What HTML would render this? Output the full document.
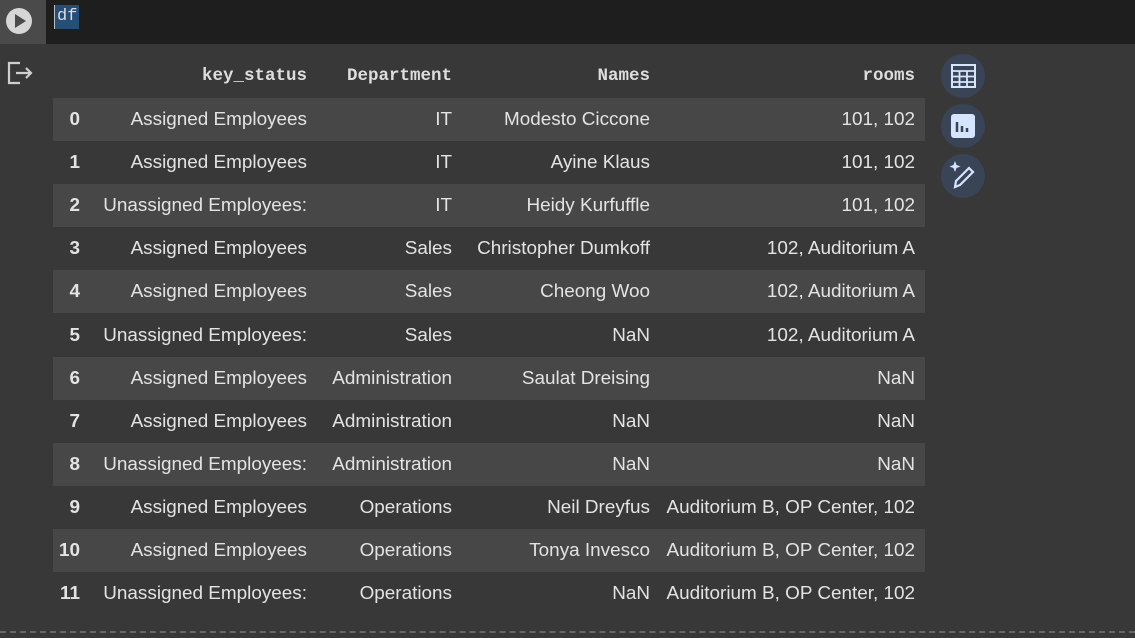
<!DOCTYPE html>
<html><head><style>
body{margin:0;width:1135px;height:638px;background:#383838;overflow:hidden;font-family:"Liberation Sans",sans-serif;position:relative}
.top{position:absolute;left:0;top:0;width:1135px;height:44px;background:#1e1e1e}
.run{position:absolute;left:0;top:0;width:46px;height:44px;background:#4a4a4a}
.code{position:absolute;left:54px;top:5px;height:24px;background:#264f78;color:#ddd;font:17px "Liberation Mono",monospace;line-height:24px;padding:0 2px;border-left:1px solid #bbb}
.r{position:absolute;left:53px;width:872px;height:43px;color:#e3e3e3;font-size:18.9px;line-height:43px}
.r.e{background:#474747}
.r span{position:absolute;text-align:right;white-space:nowrap}
.h{font:bold 17.5px "Liberation Mono",monospace;color:#ddd;border-bottom:1px solid #777;height:43px;line-height:43px}
.i{font-weight:bold;left:0;right:auto}
.c{position:absolute;left:941px;width:44px;height:44px;border-radius:50%;background:#3a4457}
.dash{position:absolute;left:0;top:631px;width:1135px;border-top:2px dashed #666}
</style></head><body>
<div class="top"></div>
<div class="run"><svg width="46" height="44"><circle cx="19" cy="21" r="13" fill="#d6d6d6"/><path d="M15 14 L26 21 L15 28Z" fill="#4a4a4a"/></svg></div>
<div class="code">df</div>
<svg style="position:absolute;left:6px;top:60px" width="28" height="26"><path d="M14 3H3V23H14M10 13H25M20 8L25 13L20 18" fill="none" stroke="#cfcfcf" stroke-width="2.2"/></svg>
<div class="c" style="top:54px"><svg width="44" height="44"><rect x="11" y="11" width="23" height="22" fill="none" stroke="#d6e4ff" stroke-width="2"/><path d="M11 17H34M11 22.5H34M11 28H34M18.5 17V33M26 17V33" stroke="#d6e4ff" stroke-width="1.8"/></svg></div>
<div class="c" style="top:104px"><svg width="44" height="44"><rect x="10" y="10" width="24" height="24" rx="3" fill="#d6e4ff"/><path d="M16 18V28M21 22V28M26 24V28" stroke="#3a4457" stroke-width="2.5"/></svg></div>
<div class="c" style="top:154px"><svg width="44" height="44"><path d="M14 33L15 27L28 14L32 18L19 31Z" fill="none" stroke="#d6e4ff" stroke-width="2.2"/><path d="M14 7L15.5 11L19.5 12.5L15.5 14L14 18L12.5 14L8.5 12.5L12.5 11Z" fill="#d6e4ff"/></svg></div>
<div class="r h" style="top:55px"><span style="right:618px">key_status</span><span style="right:473px">Department</span><span style="right:275px">Names</span><span style="right:10px">rooms</span></div>
<div id="rows"></div>
<script>
var d=[["Assigned Employees","IT","Modesto Ciccone","101, 102"],["Assigned Employees","IT","Ayine Klaus","101, 102"],["Unassigned Employees:","IT","Heidy Kurfuffle","101, 102"],["Assigned Employees","Sales","Christopher Dumkoff","102, Auditorium A"],["Assigned Employees","Sales","Cheong Woo","102, Auditorium A"],["Unassigned Employees:","Sales","NaN","102, Auditorium A"],["Assigned Employees","Administration","Saulat Dreising","NaN"],["Assigned Employees","Administration","NaN","NaN"],["Unassigned Employees:","Administration","NaN","NaN"],["Assigned Employees","Operations","Neil Dreyfus","Auditorium B, OP Center, 102"],["Assigned Employees","Operations","Tonya Invesco","Auditorium B, OP Center, 102"],["Unassigned Employees:","Operations","NaN","Auditorium B, OP Center, 102"]];
var h="";d.forEach(function(r,i){h+='<div class="r'+(i%2==0?' e':'')+'" style="top:'+(98+i*43.1)+'px"><span class="i" style="text-align:right;width:27px">'+i+'</span><span style="right:618px">'+r[0]+'</span><span style="right:473px">'+r[1]+'</span><span style="right:275px">'+r[2]+'</span><span style="right:10px">'+r[3]+'</span></div>';});
document.getElementById("rows").innerHTML=h;
</script>
<div class="dash"></div>
</body></html>
